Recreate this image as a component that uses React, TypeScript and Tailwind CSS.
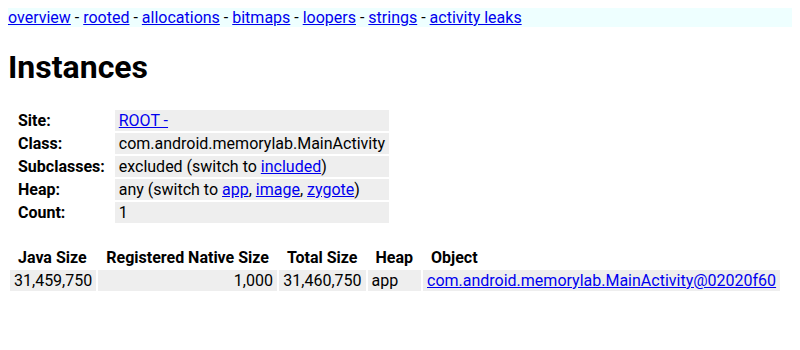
const Link = ({ children }: { children: React.ReactNode }) => (
  <a href="#" className="text-[#0000ee] underline">
    {children}
  </a>
);

const menu = ["overview", "rooted", "allocations", "bitmaps", "loopers", "strings", "activity leaks"];

const InfoRow = ({ label, children }: { label: string; children: React.ReactNode }) => (
  <tr>
    <th className="px-2 py-px text-left font-bold">{label}</th>
    <td className="bg-[#eeeeee] px-1 py-px">{children}</td>
  </tr>
);

export default function App() {
  return (
    <div className="m-2 text-[16px] leading-[normal] text-black font-['Roboto',sans-serif]">
      <div className="bg-[#eeffff]">
        {menu.map((m, i) => (
          <span key={m}>
            {i > 0 && " - "}
            <Link>{m}</Link>
          </span>
        ))}
      </div>

      <h1 className="my-[21.44px] text-[32px] font-bold">Instances</h1>

      <table className="border-separate border-spacing-[2px]">
        <tbody>
          <InfoRow label="Site:">
            <Link>ROOT -</Link>
          </InfoRow>
          <InfoRow label="Class:">com.android.memorylab.MainActivity</InfoRow>
          <InfoRow label="Subclasses:">
            excluded (switch to <Link>included</Link>)
          </InfoRow>
          <InfoRow label="Heap:">
            any (switch to <Link>app</Link>, <Link>image</Link>, <Link>zygote</Link>)
          </InfoRow>
          <InfoRow label="Count:">1</InfoRow>
        </tbody>
      </table>

      <table className="mt-5 border-separate border-spacing-[2px]">
        <thead>
          <tr>
            {["Java Size", "Registered Native Size", "Total Size", "Heap", "Object"].map((h) => (
              <th key={h} className="px-2 py-px text-left font-bold">
                {h}
              </th>
            ))}
          </tr>
        </thead>
        <tbody>
          <tr>
            <td className="bg-[#eeeeee] px-1 py-px text-right">31,459,750</td>
            <td className="bg-[#eeeeee] px-1 py-px text-right">1,000</td>
            <td className="bg-[#eeeeee] px-1 py-px text-right">31,460,750</td>
            <td className="bg-[#eeeeee] px-1 py-px">app</td>
            <td className="bg-[#eeeeee] px-1 py-px">
              <Link>com.android.memorylab.MainActivity@02020f60</Link>
            </td>
          </tr>
        </tbody>
      </table>
    </div>
  );
}
